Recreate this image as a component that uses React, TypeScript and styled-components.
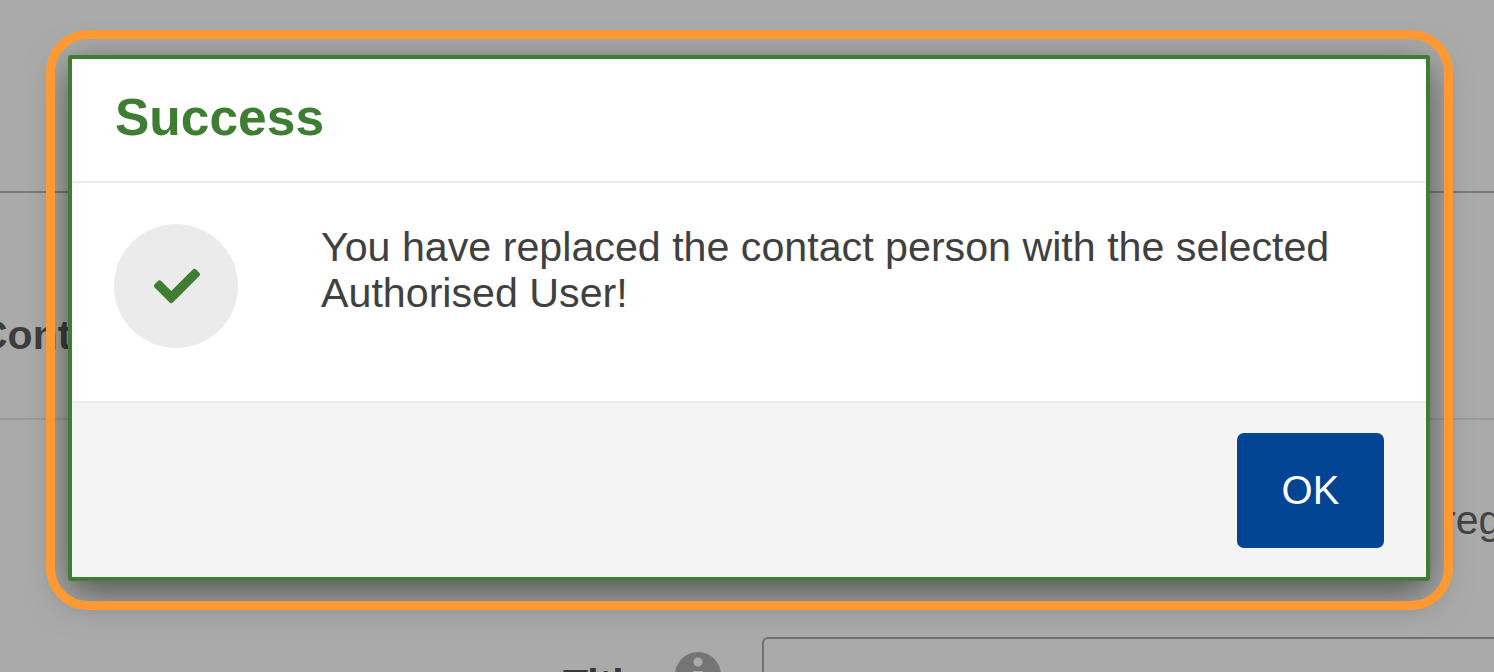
import * as React from 'react';
import styled, { createGlobalStyle } from 'styled-components';
import { FaCheck } from 'react-icons/fa';

const GlobalStyle = createGlobalStyle`
  html,
  body {
    margin: 0;
    height: 100%;
    overflow: hidden;
    background: #fff;
  }
  body {
    font-family: 'Liberation Sans', Arial, sans-serif;
    color: #404040;
  }
`;

const Page = styled.div`
  position: relative;
  width: 1494px;
  height: 672px;
  overflow: hidden;
`;

const PageHeader = styled.header`
  height: 191px;
  border-bottom: 2px solid #b4b4b4;
`;

const SectionHead = styled.div`
  height: 225px;
  border-bottom: 2px solid #e6e6e6;
  box-sizing: content-box;
`;

const SectionTitle = styled.h2`
  margin: 0 0 0 -22px;
  padding-top: 119px;
  font-size: 41px;
  line-height: 46px;
  font-weight: 700;
  white-space: nowrap;
  color: #5c5c5c;
`;

const Hint = styled.p`
  margin: 0 0 0 1442px;
  padding-top: 78px;
  height: 140px;
  box-sizing: border-box;
  font-size: 41px;
  line-height: 44px;
  white-space: nowrap;
  color: #666;
`;

const FieldRow = styled.div`
  display: flex;
  align-items: flex-start;
  margin-left: 563px;
  margin-top: 77px;
`;

const FieldLabel = styled.label`
  flex: none;
  margin-top: 25px;
  width: 112px;
  font-size: 41px;
  line-height: 44px;
  font-weight: 700;
  color: #555;
`;

const InfoIcon = styled.svg`
  flex: none;
  display: block;
  width: 46px;
  height: 46px;
  margin-top: 15px;
  margin-right: 41px;
  fill: #b0b0b0;
`;

const FieldInput = styled.div`
  flex: none;
  width: 800px;
  height: 80px;
  border: 2px solid #a8a8a8;
  border-radius: 6px;
  box-sizing: border-box;
`;

const Backdrop = styled.div`
  position: absolute;
  inset: 0;
  background: rgba(0, 0, 0, 0.335);
`;

const Dialog = styled.section`
  position: absolute;
  left: 68px;
  top: 55px;
  width: 1362px;
  height: 526px;
  box-sizing: border-box;
  display: flex;
  flex-direction: column;
  background: #fff;
  border: 4px solid #3f7d33;
  border-radius: 3px;
  box-shadow: 0 12px 38px rgba(0, 0, 0, 0.52);
`;

const DialogHeader = styled.div`
  height: 124px;
  box-sizing: border-box;
  display: flex;
  align-items: center;
  padding: 0 0 7px 43px;
  border-bottom: 2px solid #ececec;
`;

const DialogTitle = styled.h1`
  margin: 0;
  font-size: 51.5px;
  font-weight: 700;
  color: #3f7d33;
`;

const DialogBody = styled.div`
  flex: 1;
  display: flex;
  align-items: flex-start;
  padding: 41px 80px 0 42px;
`;

const IconCircle = styled.div`
  width: 124px;
  height: 124px;
  flex: none;
  display: flex;
  align-items: center;
  justify-content: center;
  padding: 0 0 1px 2px;
  box-sizing: border-box;
  border-radius: 50%;
  background: #ebebeb;
  margin-right: 83px;
  color: #3f7d33;
`;

const Message = styled.p`
  margin: 0;
  font-size: 41.2px;
  line-height: 46px;
  color: #404040;
`;

const DialogFooter = styled.div`
  height: 176px;
  box-sizing: border-box;
  display: flex;
  align-items: flex-start;
  justify-content: flex-end;
  padding: 30px 42px 0 0;
  background: #f4f4f4;
  border-top: 2px solid #ececec;
`;

const OkButton = styled.button`
  width: 147px;
  height: 115px;
  padding: 0;
  border: 0;
  border-radius: 7px;
  background: #004494;
  color: #fff;
  font-family: inherit;
  font-size: 40px;
`;

const Highlight = styled.div`
  position: absolute;
  left: 46px;
  top: 30px;
  width: 1407px;
  height: 580px;
  box-sizing: border-box;
  border: 9px solid #ff9933;
  border-radius: 42px;
  pointer-events: none;
`;

export default function App() {
  return (
    <Page>
      <GlobalStyle />
      <PageHeader />
      <SectionHead>
        <SectionTitle>Contact person</SectionTitle>
      </SectionHead>
      <Hint>registered</Hint>
      <FieldRow>
        <FieldLabel>Title</FieldLabel>
        <InfoIcon viewBox="0 0 46 46">
          <circle cx="23" cy="23" r="23" />
          <circle cx="23" cy="10" r="4.5" fill="#fff" />
          <rect x="18" y="19" width="10" height="20" fill="#fff" />
        </InfoIcon>
        <FieldInput />
      </FieldRow>
      <Backdrop />
      <Dialog role="dialog">
        <DialogHeader>
          <DialogTitle>Success</DialogTitle>
        </DialogHeader>
        <DialogBody>
          <IconCircle>
            <FaCheck size={46} />
          </IconCircle>
          <Message>
            You have replaced the contact person with the selected Authorised
            User!
          </Message>
        </DialogBody>
        <DialogFooter>
          <OkButton>OK</OkButton>
        </DialogFooter>
      </Dialog>
      <Highlight />
    </Page>
  );
}
